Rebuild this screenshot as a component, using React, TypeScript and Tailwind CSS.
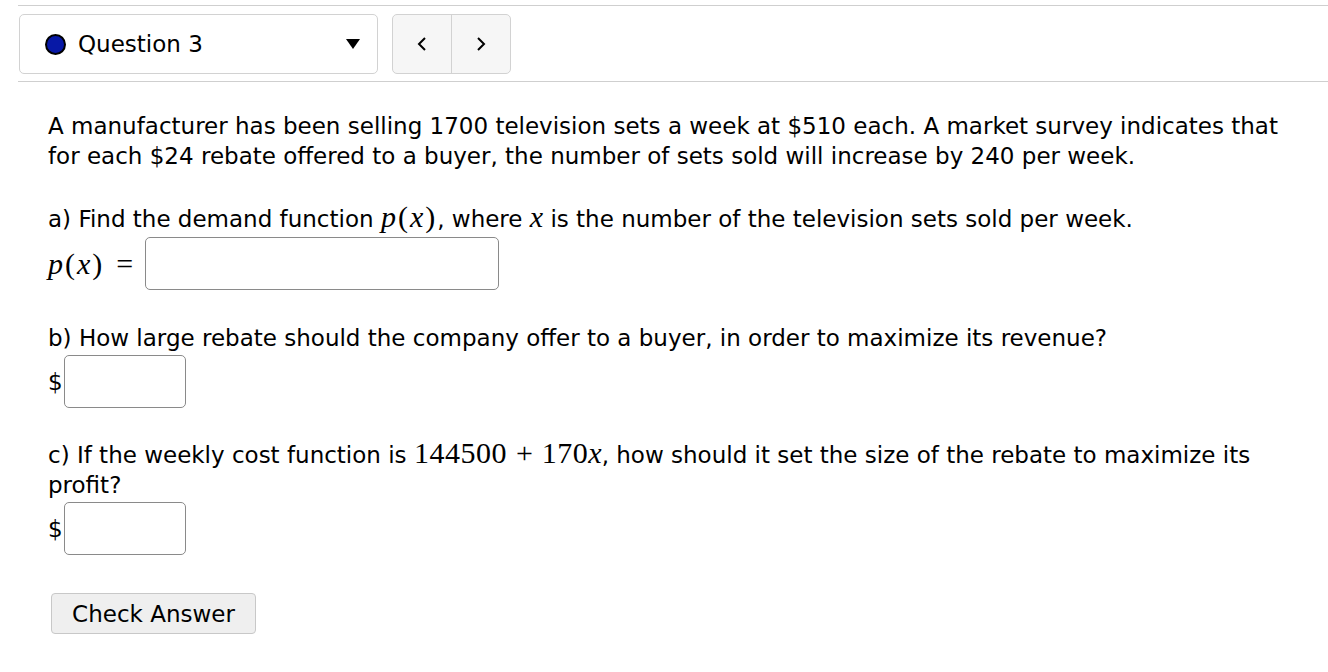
const sans = "font-['DejaVu_Sans','Verdana',sans-serif]";
const serif = "font-['Liberation_Serif','DejaVu_Serif',serif] text-[30px] leading-none";

function PX() {
  return (
    <span className={`${serif} tracking-[2px]`}>
      <i>p</i>(<i>x</i>)
    </span>
  );
}

export default function App() {
  return (
    <div className={`${sans} text-[23px] leading-[30px] text-black bg-white min-h-[672px] pt-[5px]`}>
      {/* header */}
      <div className="ml-[18px] border-t border-b border-[#cfcfcf] pt-[8px] pb-[7px] flex gap-[14px] pl-[1px]">
        <div className="w-[359px] h-[60px] border border-[#d2d2d2] rounded-[5px] flex items-center pl-[25px] pr-[17px]">
          <span className="w-[21px] h-[21px] rounded-full bg-[#0718a6] border-[2px] border-black" />
          <span className="ml-[12px] flex-1">Question 3</span>
          <svg width="14" height="10" viewBox="0 0 14 10">
            <path d="M0 0 L14 0 L7 10 Z" fill="#000" />
          </svg>
        </div>
        <div className="w-[119px] h-[60px] border border-[#d2d2d2] rounded-[5px] bg-[#f6f6f6] flex">
          <div className="w-[59px] border-r border-[#d2d2d2] flex items-center justify-center">
            <svg width="12" height="16" viewBox="0 0 12 16">
              <path d="M9 2 L3 8 L9 14" fill="none" stroke="#000" strokeWidth="2" />
            </svg>
          </div>
          <div className="flex-1 flex items-center justify-center">
            <svg width="12" height="16" viewBox="0 0 12 16">
              <path d="M3 2 L9 8 L3 14" fill="none" stroke="#000" strokeWidth="2" />
            </svg>
          </div>
        </div>
      </div>

      {/* question body */}
      <div className="pl-[48px] pr-[40px] pt-[29px]">
        <p>
          A manufacturer has been selling 1700 television sets a week at $510 each. A market survey indicates that
          for each $24 rebate offered to a buyer, the number of sets sold will increase by 240 per week.
        </p>

        <p className="mt-[31px]">
          a) Find the demand function <PX />, where <i className={serif}>x</i> is the number of the television sets
          sold per week.
        </p>
        <div className="flex items-center mt-[3px]">
          <PX />
          <span className={`${serif} ml-[12px] mr-[12px]`}>=</span>
          <div className="w-[354px] h-[53px] border border-[#8a8a8a] rounded-[5px]" />
        </div>

        <p className="mt-[33px]">b) How large rebate should the company offer to a buyer, in order to maximize its revenue?</p>
        <div className="flex items-center mt-[2px]">
          <span>$</span>
          <div className="ml-[1px] w-[122px] h-[53px] border border-[#8a8a8a] rounded-[5px]" />
        </div>

        <p className="mt-[30px]">
          c) If the weekly cost function is <span className={`${serif} tracking-[0.5px]`}>144500</span>
          <span className={`${serif} mx-[9px]`}>+</span>
          <span className={`${serif} tracking-[0.5px]`}>170</span>
          <i className={serif}>x</i>, how should it set the size of the rebate to maximize its profit?
        </p>
        <div className="flex items-center mt-[2px]">
          <span>$</span>
          <div className="ml-[1px] w-[122px] h-[53px] border border-[#8a8a8a] rounded-[5px]" />
        </div>

        <button className="mt-[38px] ml-[3px] w-[205px] h-[41px] bg-[#efefef] border border-[#c8c8c8] rounded-[4px] text-[23px]">
          Check Answer
        </button>
      </div>
    </div>
  );
}
